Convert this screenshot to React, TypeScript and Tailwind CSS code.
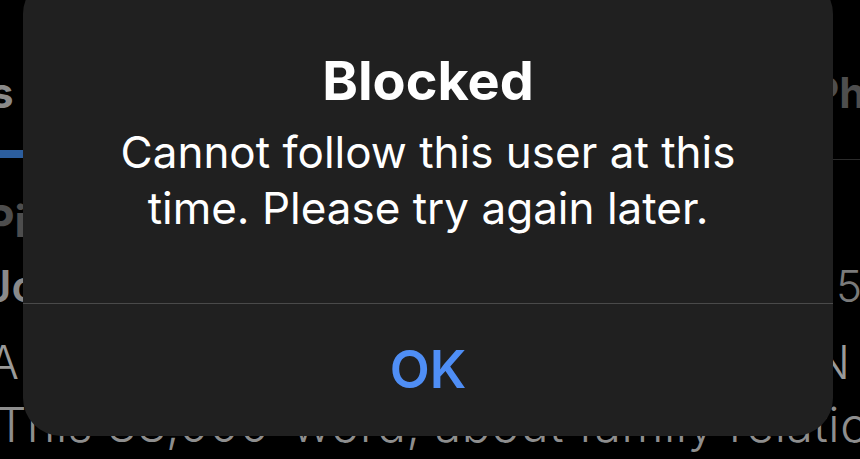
import React from 'react'

// iOS-style alert sitting over a dimmed profile page

function BackgroundPage() {
  return (
    <div className="flex h-[459px] w-full flex-col overflow-hidden bg-black">
      {/* tab labels */}
      <div className="mt-[72px] flex h-[42px] items-start justify-between text-[42px] font-bold leading-none">
        <div className="ml-[-10px] text-[#8a8a8a]">s</div>
        <div className="w-[48px] whitespace-nowrap text-[#4e4e4e]">Ph</div>
      </div>

      {/* tab indicator */}
      <div className="mt-[36px] flex h-[8px] items-start justify-between">
        <div className="h-[8px] w-[30px] bg-[#2c5e9e]" />
        <div className="mt-[9px] h-px w-[40px] bg-[#2b2b2b]" />
      </div>

      <div className="mt-[41px] flex h-[44px] items-start text-[44px] font-bold leading-none text-[#4d4d4d]">
        <div className="ml-[-14px] whitespace-nowrap">Pi</div>
      </div>

      <div className="mt-[21px] flex h-[44px] items-start justify-between text-[44px] leading-none">
        <div className="ml-[-14px] whitespace-nowrap font-semibold text-[#8a8a8a]">Jo</div>
        <div className="w-[24px] whitespace-nowrap font-light text-[#7a7a7a]">5</div>
      </div>

      <div className="mt-[31px] flex h-[46px] items-start justify-between text-[46px] font-light leading-none text-[#9a9a9a]">
        <div className="ml-[-12px] whitespace-nowrap">A</div>
        <div className="w-[45px] whitespace-nowrap">N</div>
      </div>

      <div className="mt-[16px] flex h-[48px] items-start text-[48px] font-light leading-none text-[#8e8e8e]">
        <div className="ml-[-4px] whitespace-nowrap tracking-[0.6px]">This 88,000-word, about family relatio</div>
      </div>
    </div>
  )
}

function AlertDialog() {
  return (
    <div className="absolute left-[23px] top-[-24px] flex h-[460px] w-[810px] flex-col rounded-[38px] bg-[#202020]">
      <div className="flex flex-1 flex-col items-center pt-[78px]">
        <h1 className="text-[54px] font-bold leading-none text-white">Blocked</h1>
        <p className="mt-[16px] text-center text-[44px] leading-[56px] text-white">
          Cannot follow this user at this
          <br />
          time. Please try again later.
        </p>
      </div>
      <div className="h-px w-full bg-[#4a4a4a]" />
      <div className="flex h-[132px] items-start justify-center pt-[40px]">
        <span className="text-[52px] font-semibold leading-none text-[#4f8ef5]">OK</span>
      </div>
    </div>
  )
}

export default function App() {
  return (
    <div
      className="relative h-[459px] w-[860px] overflow-hidden bg-black"
      style={{ fontFamily: 'Inter, "Noto Sans", sans-serif' }}
    >
      <BackgroundPage />
      <AlertDialog />
    </div>
  )
}
